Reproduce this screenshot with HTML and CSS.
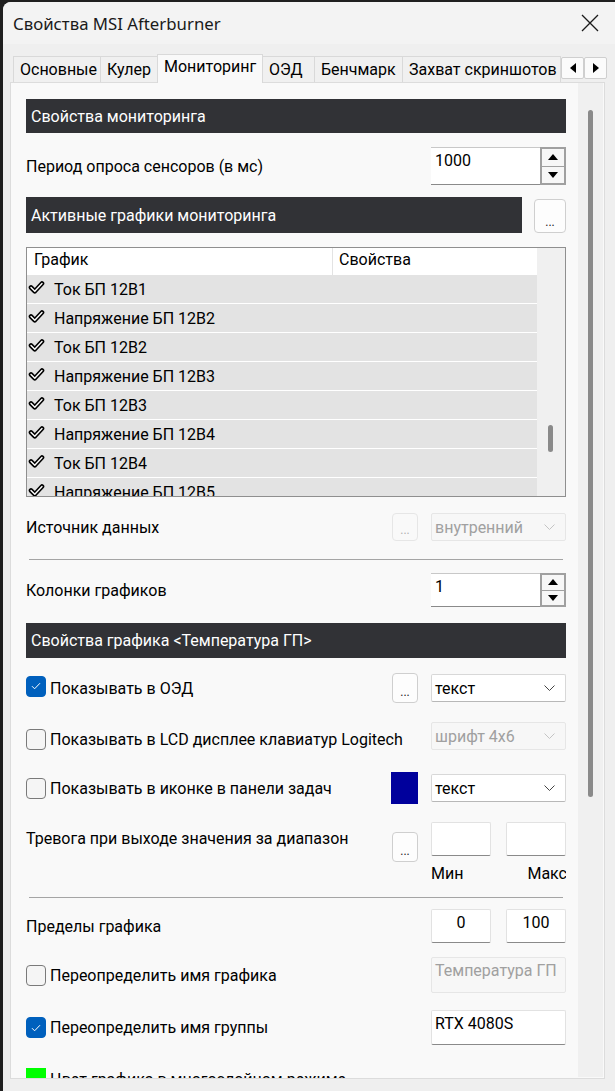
FILE: index.html
```html
<!DOCTYPE html>
<html lang="ru">
<head>
<meta charset="utf-8">
<title>Свойства MSI Afterburner</title>
<link rel="stylesheet" href="styles.css">
</head>
<body>
<div class="window">
  <div class="titlebar">
    <span class="title">Свойства MSI Afterburner</span>
    <svg class="close" width="18" height="18" viewBox="0 0 18 18"><path d="M1 1 L17 17 M17 1 L1 17" stroke="#1a1a1a" stroke-width="1.3" fill="none"/></svg>
  </div>
  <div class="tabs">
    <div class="tab t1">Основные</div>
    <div class="tab t2">Кулер</div>
    <div class="tab t3 active">Мониторинг</div>
    <div class="tab t4">ОЭД</div>
    <div class="tab t5">Бенчмарк</div>
    <div class="tab t6">Захват скриншотов</div>
    <div class="tab-arrows">
      <div class="arr"><svg width="8" height="10" viewBox="0 0 8 10"><path d="M7 0 L7 10 L1 5 Z" fill="#000"/></svg></div>
      <div class="arr"><svg width="8" height="10" viewBox="0 0 8 10"><path d="M1 0 L1 10 L7 5 Z" fill="#000"/></svg></div>
    </div>
  </div>
  <div class="panel">
    <div class="content">
      <div class="header h-top">Свойства мониторинга</div>

      <div class="row r-period">
        <span class="label">Период опроса сенсоров (в мс)</span>
        <div class="spin">
          <div class="spin-input">1000</div>
          <div class="spin-btns">
            <div class="sbtn"><svg width="10" height="6" viewBox="0 0 10 6"><path d="M0 6 L10 6 L5 0 Z" fill="#000"/></svg></div>
            <div class="sbtn"><svg width="10" height="6" viewBox="0 0 10 6"><path d="M0 0 L10 0 L5 6 Z" fill="#000"/></svg></div>
          </div>
        </div>
      </div>

      <div class="row r-active">
        <div class="header h-active">Активные графики мониторинга</div>
        <div class="dots big">...</div>
      </div>

      <div class="list">
        <div class="list-main">
          <div class="list-head">
            <div class="col1">График</div>
            <div class="col2">Свойства</div>
          </div>
          <div class="lrow"><svg class="chk" width="17" height="15" viewBox="0 0 17 15"><path d="M3 7.5 L6.8 11.3 L14 3.5" stroke="#000" stroke-width="4.6" fill="none" stroke-linecap="round" stroke-linejoin="round"/><path d="M3 7.5 L6.8 11.3 L14 3.5" stroke="#fff" stroke-width="1.4" fill="none" stroke-linecap="round" stroke-linejoin="round"/></svg>Ток БП 12В1</div>
          <div class="lrow"><svg class="chk" width="17" height="15" viewBox="0 0 17 15"><path d="M3 7.5 L6.8 11.3 L14 3.5" stroke="#000" stroke-width="4.6" fill="none" stroke-linecap="round" stroke-linejoin="round"/><path d="M3 7.5 L6.8 11.3 L14 3.5" stroke="#fff" stroke-width="1.4" fill="none" stroke-linecap="round" stroke-linejoin="round"/></svg>Напряжение БП 12В2</div>
          <div class="lrow"><svg class="chk" width="17" height="15" viewBox="0 0 17 15"><path d="M3 7.5 L6.8 11.3 L14 3.5" stroke="#000" stroke-width="4.6" fill="none" stroke-linecap="round" stroke-linejoin="round"/><path d="M3 7.5 L6.8 11.3 L14 3.5" stroke="#fff" stroke-width="1.4" fill="none" stroke-linecap="round" stroke-linejoin="round"/></svg>Ток БП 12В2</div>
          <div class="lrow"><svg class="chk" width="17" height="15" viewBox="0 0 17 15"><path d="M3 7.5 L6.8 11.3 L14 3.5" stroke="#000" stroke-width="4.6" fill="none" stroke-linecap="round" stroke-linejoin="round"/><path d="M3 7.5 L6.8 11.3 L14 3.5" stroke="#fff" stroke-width="1.4" fill="none" stroke-linecap="round" stroke-linejoin="round"/></svg>Напряжение БП 12В3</div>
          <div class="lrow"><svg class="chk" width="17" height="15" viewBox="0 0 17 15"><path d="M3 7.5 L6.8 11.3 L14 3.5" stroke="#000" stroke-width="4.6" fill="none" stroke-linecap="round" stroke-linejoin="round"/><path d="M3 7.5 L6.8 11.3 L14 3.5" stroke="#fff" stroke-width="1.4" fill="none" stroke-linecap="round" stroke-linejoin="round"/></svg>Ток БП 12В3</div>
          <div class="lrow"><svg class="chk" width="17" height="15" viewBox="0 0 17 15"><path d="M3 7.5 L6.8 11.3 L14 3.5" stroke="#000" stroke-width="4.6" fill="none" stroke-linecap="round" stroke-linejoin="round"/><path d="M3 7.5 L6.8 11.3 L14 3.5" stroke="#fff" stroke-width="1.4" fill="none" stroke-linecap="round" stroke-linejoin="round"/></svg>Напряжение БП 12В4</div>
          <div class="lrow"><svg class="chk" width="17" height="15" viewBox="0 0 17 15"><path d="M3 7.5 L6.8 11.3 L14 3.5" stroke="#000" stroke-width="4.6" fill="none" stroke-linecap="round" stroke-linejoin="round"/><path d="M3 7.5 L6.8 11.3 L14 3.5" stroke="#fff" stroke-width="1.4" fill="none" stroke-linecap="round" stroke-linejoin="round"/></svg>Ток БП 12В4</div>
          <div class="lrow"><svg class="chk" width="17" height="15" viewBox="0 0 17 15"><path d="M3 7.5 L6.8 11.3 L14 3.5" stroke="#000" stroke-width="4.6" fill="none" stroke-linecap="round" stroke-linejoin="round"/><path d="M3 7.5 L6.8 11.3 L14 3.5" stroke="#fff" stroke-width="1.4" fill="none" stroke-linecap="round" stroke-linejoin="round"/></svg>Напряжение БП 12В5</div>
        </div>
        <div class="list-scroll"><div class="list-thumb"></div></div>
      </div>

      <div class="row r-source">
        <span class="label">Источник данных</span>
        <div class="controls">
          <div class="dots disabled">...</div>
          <div class="dropdown disabled"><span>внутренний</span><svg width="11" height="6" viewBox="0 0 11 6"><path d="M0.5 0.5 L5.5 5.5 L10.5 0.5" stroke="#c4c4c4" stroke-width="1" fill="none"/></svg></div>
        </div>
      </div>

      <div class="sep s1"></div>

      <div class="row r-cols">
        <span class="label">Колонки графиков</span>
        <div class="spin small">
          <div class="spin-input">1</div>
          <div class="spin-btns">
            <div class="sbtn"><svg width="10" height="6" viewBox="0 0 10 6"><path d="M0 6 L10 6 L5 0 Z" fill="#000"/></svg></div>
            <div class="sbtn"><svg width="10" height="6" viewBox="0 0 10 6"><path d="M0 0 L10 0 L5 6 Z" fill="#000"/></svg></div>
          </div>
        </div>
      </div>

      <div class="header h-graph">Свойства графика &lt;Температура ГП&gt;</div>

      <div class="row r-osd">
        <span class="check on"><svg width="12" height="10" viewBox="0 0 12 10"><path d="M2 5.2 L4.6 7.8 L10 2.2" stroke="#fff" stroke-width="1" fill="none"/></svg></span>
        <span class="label">Показывать в ОЭД</span>
        <div class="controls">
          <div class="dots">...</div>
          <div class="dropdown"><span>текст</span><svg width="11" height="6" viewBox="0 0 11 6"><path d="M0.5 0.5 L5.5 5.5 L10.5 0.5" stroke="#444" stroke-width="1" fill="none"/></svg></div>
        </div>
      </div>

      <div class="row r-lcd">
        <span class="check"></span>
        <span class="label">Показывать в LCD дисплее клавиатур Logitech</span>
        <div class="controls">
          <div class="dropdown disabled"><span>шрифт 4x6</span><svg width="11" height="6" viewBox="0 0 11 6"><path d="M0.5 0.5 L5.5 5.5 L10.5 0.5" stroke="#c4c4c4" stroke-width="1" fill="none"/></svg></div>
        </div>
      </div>

      <div class="row r-tray">
        <span class="check"></span>
        <span class="label">Показывать в иконке в панели задач</span>
        <div class="controls">
          <div class="swatch"></div>
          <div class="dropdown"><span>текст</span><svg width="11" height="6" viewBox="0 0 11 6"><path d="M0.5 0.5 L5.5 5.5 L10.5 0.5" stroke="#444" stroke-width="1" fill="none"/></svg></div>
        </div>
      </div>

      <div class="row r-alarm">
        <span class="label">Тревога при выходе значения за диапазон</span>
        <div class="controls">
          <div class="dots alarm-dots">...</div>
          <div class="field sq"></div>
          <div class="field sq"></div>
        </div>
      </div>
      <div class="minmax"><span>Мин</span><span>Макс</span></div>

      <div class="sep s2"></div>

      <div class="row r-limits">
        <span class="label">Пределы графика</span>
        <div class="controls">
          <div class="field sq center">0</div>
          <div class="field sq center">100</div>
        </div>
      </div>

      <div class="row r-name">
        <span class="check"></span>
        <span class="label">Переопределить имя графика</span>
        <div class="field wide disabled">Температура ГП</div>
      </div>

      <div class="row r-group">
        <span class="check on"><svg width="12" height="10" viewBox="0 0 12 10"><path d="M2 5.2 L4.6 7.8 L10 2.2" stroke="#fff" stroke-width="1" fill="none"/></svg></span>
        <span class="label">Переопределить имя группы</span>
        <div class="field wide">RTX 4080S</div>
      </div>

      <div class="row r-color">
        <span class="green"></span>
        <span class="label">Цвет графика в многослойном режиме</span>
      </div>
    </div>
    <div class="vscroll"><div class="vthumb"></div></div>
  </div>
</div>
</body>
</html>
```

FILE: styles.css
```css
* { box-sizing: border-box; }
html, body { margin: 0; padding: 0; }
body {
  background: #1f1f1f;
  width: 615px;
  height: 1091px;
  overflow: hidden;
  font-family: Roboto, "Liberation Sans", sans-serif;
  font-size: 16px;
  color: #000;
}
.window {
  margin: 2px 0 0 3px;
  width: 612px;
  height: 1089px;
  background: #efefef;
  border-top-left-radius: 8px;
  overflow: hidden;
}
.titlebar {
  height: 42px;
  background: #f3f3f3;
  display: flex;
  align-items: center;
  padding-left: 10px;
}
.title {
  font-family: "Noto Sans", "Liberation Sans", sans-serif;
  font-size: 16.8px;
  color: #1a1a1a;
}
.close { margin-left: auto; margin-right: 16px; }

.tabs {
  margin: 10px 0 0 10px;
  height: 28px;
  display: flex;
  align-items: flex-end;
}
.tab {
  height: 26px;
  border: 1px solid #d9d9d9;
  border-right: none;
  border-bottom: none;
  background: #f0f0f0;
  font-size: 16px;
  line-height: 25px;
  padding-left: 6px;
  white-space: nowrap;
  overflow: hidden;
}
.t1 { width: 87px; }
.t2 { width: 57px; }
.t3 { width: 106px; }
.t4 { width: 51px; }
.t5 { width: 88px; }
.t6 { width: 159px; border-right: 1px solid #d9d9d9; }
.tab.active {
  height: 29px;
  margin-bottom: -1px;
  background: #f9f9f9;
  border-right: 1px solid #d9d9d9;
  line-height: 24px;
  position: relative;
  z-index: 2;
}
.t4 { border-left: none; }
.tab-arrows {
  display: flex;
  margin-bottom: 3px;
}
.arr {
  width: 23px;
  height: 22px;
  border: 1px solid #cfcfcf;
  background: #fbfbfb;
  display: flex;
  align-items: center;
  justify-content: center;
  border-radius: 2px;
}

.panel {
  margin-left: 7px;
  width: 595px;
  height: 997px;
  border: 1px solid #dcdcdc;
  background: #f9f9f9;
  display: flex;
  align-items: flex-start;
  overflow: hidden;
}
.content {
  width: 555px;
  height: 995px;
  overflow: hidden;
  padding: 16px 0 0 15px;
  display: flex;
  flex-direction: column;
  flex-shrink: 0;
}
.content > * { flex-shrink: 0; }
.vscroll {
  margin-left: 12px;
  width: 25px;
  height: 994px;
  background: #f0f0f0;
}
.vthumb {
  margin: 27px 0 0 10px;
  width: 5px;
  height: 687px;
  background: #8a8a8a;
  border-radius: 3px;
}

.header {
  background: #313236;
  color: #fff;
  display: flex;
  align-items: center;
  padding-left: 5px;
  font-size: 16px;
}
.h-top { height: 34px; }
.h-graph { height: 35px; margin-top: 16px; }

.row {
  display: flex;
  align-items: center;
  width: 540px;
}
.label { white-space: nowrap; }
.controls {
  margin-left: auto;
  display: flex;
  align-items: center;
}

.r-period { margin-top: 14px; height: 38px; }
.spin { margin-left: auto; display: flex; height: 38px; }
.spin.small { height: 34px; }
.spin-input {
  width: 109px;
  height: 100%;
  background: #fff;
  border-top: 1px solid #c8c8c8;
  border-bottom: 1px solid #8a8a8a;
  padding: 3px 0 0 4px;
  line-height: 20px;
}
.spin-btns {
  width: 26px;
  border: 1px solid #a0a0a0;
  display: flex;
  flex-direction: column;
  background: #a0a0a0;
  gap: 1px;
  padding: 1px;
}
.sbtn {
  flex: 1;
  background: #f7f7f7;
  display: flex;
  align-items: center;
  justify-content: center;
}

.r-active { margin-top: 12px; height: 36px; align-items: flex-end; }
.h-active { width: 496px; height: 36px; }
.dots {
  width: 26px;
  height: 30px;
  border: 1px solid #cfcfcf;
  border-radius: 4px;
  background: #fdfdfd;
  font-size: 12px;
  color: #222;
  display: flex;
  justify-content: center;
  align-items: flex-end;
  padding-bottom: 4px;
  line-height: 12px;
}
.dots.big { width: 32px; height: 34px; margin-left: auto; }
.dots.disabled { color: #b0b0b0; border-color: #e6e6e6; background: #f9f9f9; }

.list {
  margin-top: 14px;
  width: 540px;
  height: 250px;
  border: 1px solid #8f8f8f;
  background: #fff;
  display: flex;
  overflow: hidden;
}
.list-main { width: 510px; display: flex; flex-direction: column; overflow: hidden; }
.list-head { height: 27px; flex-shrink: 0; display: flex; background: #fff; }
.col1 { width: 306px; border-right: 1px solid #e3e3e3; padding: 2px 0 0 7px; }
.col2 { padding: 2px 0 0 6px; }
.lrow {
  height: 29px;
  flex-shrink: 0;
  background: #e3e3e3;
  border-bottom: 1px solid #fff;
  display: flex;
  align-items: center;
  padding-left: 1px;
}
.chk { margin-right: 9px; margin-top: -3px; }
.list-scroll { width: 28px; background: #f0f0f0; }
.list-thumb {
  margin: 177px 0 0 11px;
  width: 5px;
  height: 27px;
  background: #8a8a8a;
  border-radius: 3px;
}

.r-source { margin-top: 16px; height: 28px; }
.r-source .dots { height: 28px; margin-right: 13px; }
.dropdown {
  width: 135px;
  height: 28px;
  background: #fff;
  border: 1px solid #d8d8d8;
  border-bottom-color: #b8b8b8;
  border-radius: 2px;
  display: flex;
  align-items: center;
  padding: 0 10px 0 3px;
  justify-content: space-between;
}
.dropdown.disabled {
  background: #f7f7f7;
  border-color: #e6e6e6;
  color: #a0a0a0;
}

.sep { height: 1px; background: #a5a5a5; margin-left: 3px; width: 534px; }
.s1 { margin-top: 18px; }
.s2 { margin-top: 14px; }

.r-cols { margin-top: 13px; height: 34px; }

.check {
  width: 20px;
  height: 21px;
  border: 1px solid #7a7a7a;
  border-radius: 4px;
  background: #f5f5f5;
  margin-right: 4px;
  display: flex;
  align-items: center;
  justify-content: center;
  flex-shrink: 0;
}
.check.on { background: #0060bd; border-color: #0060bd; }

.r-osd { margin-top: 15px; height: 30px; }
.r-osd .dots { margin-right: 13px; height: 30px; }
.r-osd .dropdown { height: 28px; }
.r-osd .check { margin-top: -4px; }
.r-lcd { margin-top: 19px; height: 28px; }
.r-lcd .check, .r-lcd .label { margin-top: 6px; }
.r-tray { margin-top: 22px; height: 32px; }
.swatch { width: 27px; height: 32px; background: #00009c; margin-right: 13px; }

.r-alarm { margin-top: 18px; height: 40px; align-items: flex-start; }
.r-alarm .label { line-height: 34px; }
.r-alarm .controls { align-items: flex-start; }
.alarm-dots { margin-top: 10px; margin-right: 13px; }
.field {
  background: #fff;
  border: 1px solid #e2e2e2;
  border-bottom-color: #8a8a8a;
  border-radius: 2px;
  padding: 3px 0 0 3px;
  line-height: 20px;
}
.field.sq { width: 60px; height: 34px; }
.field.sq + .field.sq { margin-left: 15px; }
.field.center { text-align: center; padding-left: 0; }
.field.wide { width: 135px; margin-left: auto; padding-left: 3px; }
.field.disabled { background: #f7f7f7; border-color: #e6e6e6; color: #a0a0a0; }

.minmax {
  margin-top: 3px;
  height: 18px;
  padding-left: 405px;
  display: flex;
  justify-content: space-between;
  width: 541px;
  line-height: 18px;
}

.r-limits { margin-top: 11px; height: 34px; }
.r-name { margin-top: 14px; height: 36px; }
.r-name .field { height: 36px; }
.r-group { margin-top: 17px; height: 35px; }
.r-group .field { height: 35px; }
.r-color { margin-top: 21px; height: 22px; align-items: flex-start; }
.green { width: 20px; height: 20px; background: #00ff00; margin-right: 4px; margin-top: 2px; }
.r-color .label { line-height: 24px; margin-top: 2px; }
```
